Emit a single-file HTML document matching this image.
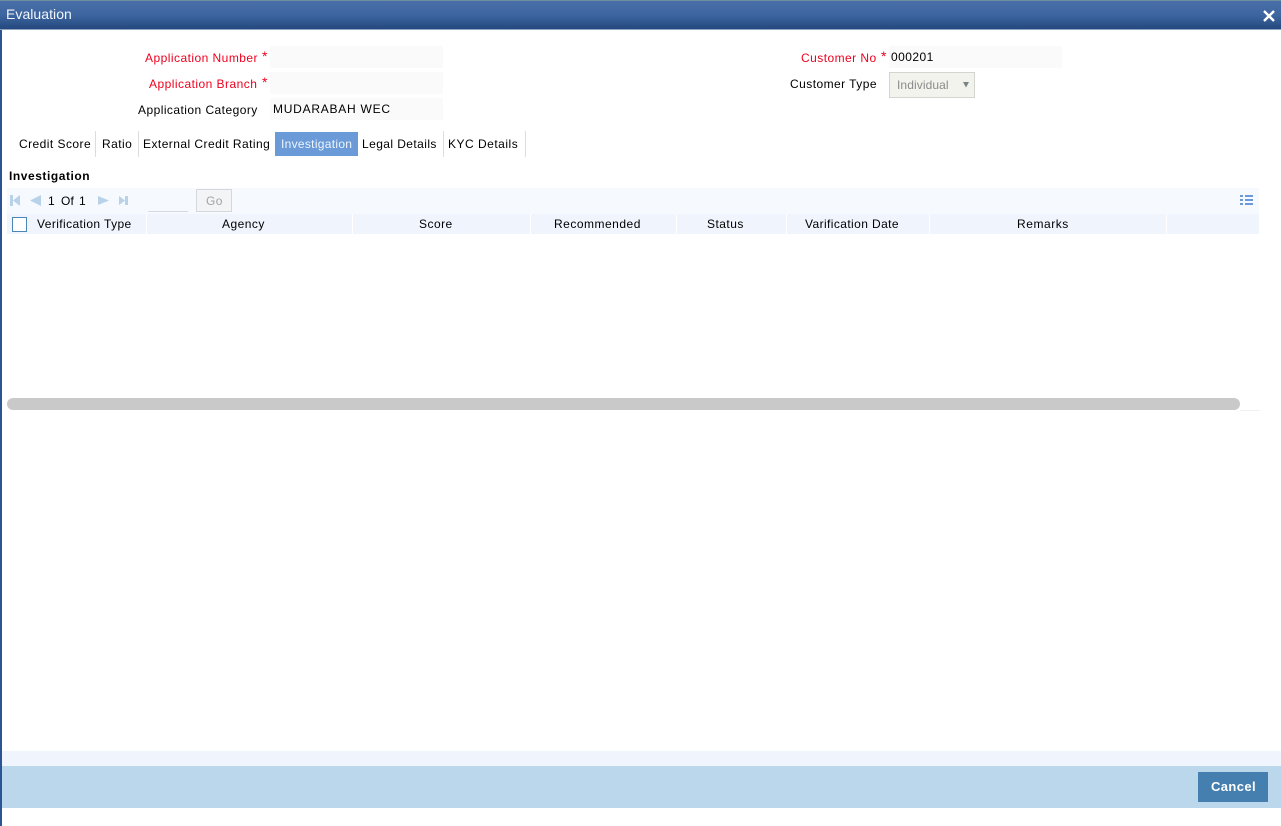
<!DOCTYPE html>
<html><head><meta charset="utf-8"><style>
html,body{margin:0;padding:0;width:1281px;height:826px;overflow:hidden;background:#fff}
body{position:relative;font-family:"Liberation Sans",Arial,sans-serif;font-size:12px;color:#000}
.a{position:absolute}
.t{position:absolute;white-space:nowrap;line-height:14px;letter-spacing:.47px}
.r{color:#f0001e}
.f{position:absolute;background:#fafafa;left:270px;width:173px;height:22px}
.s{position:absolute;top:131px;width:1px;height:26px;background:#ddd}
.h{position:absolute;top:214px;height:20px;background:#f0f5fd}
</style></head><body>
<div class="a" style="left:0;top:0;width:1281px;height:1px;background:#6d8f9f"></div>
<div class="a" style="left:0;top:1px;width:1281px;height:28px;background:linear-gradient(#4a6fa8,#3d659f 50%,#24487f)"></div>
<div class="a" style="left:0;top:29px;width:1281px;height:1px;background:#8ea5c0"></div>
<div class="a" style="left:0;top:30px;width:2px;height:796px;background:#2c5494"></div>
<div class="t" style="left:6px;top:6px;font-size:14px;line-height:16px;color:#f2f5fa;letter-spacing:.05px">Evaluation</div>
<svg class="a" style="left:1262px;top:9px" width="14" height="14" viewBox="0 0 14 14"><path d="M2 2L12 12M12 2L2 12" stroke="#fff" stroke-width="2.4"/></svg>

<div class="t r" style="left:145px;top:51px;letter-spacing:.46px">Application Number</div>
<div class="t r" style="left:262px;top:49px;font-size:14px">*</div>
<div class="t r" style="left:149px;top:77px;letter-spacing:.46px">Application Branch</div>
<div class="t r" style="left:262px;top:75px;font-size:14px">*</div>
<div class="t" style="left:138px;top:103px;letter-spacing:.45px">Application Category</div>
<div class="f" style="top:46px"></div><div class="f" style="top:72px"></div><div class="f" style="top:98px"></div>
<div class="t" style="left:273px;top:102px;letter-spacing:.75px">MUDARABAH WEC</div>

<div class="t r" style="left:801px;top:51px;letter-spacing:.45px">Customer No</div>
<div class="t r" style="left:881px;top:49px;font-size:14px">*</div>
<div class="a" style="left:889px;top:46px;width:173px;height:22px;background:#fafafa"></div>
<div class="t" style="left:891px;top:50px;letter-spacing:.45px">000201</div>
<div class="t" style="left:790px;top:77px;letter-spacing:.45px">Customer Type</div>
<div class="a" style="left:889px;top:72px;width:84px;height:24px;background:#f3f3ee;border:1px solid #d4d4d0"></div>
<div class="t" style="left:897px;top:78px;color:#8a8a8a;letter-spacing:.1px">Individual</div>
<svg class="a" style="left:962px;top:82px" width="8" height="6"><path d="M1 0H7L4 5.500Z" fill="#7a8484"/></svg>

<div class="t" style="left:19px;top:137px;letter-spacing:.45px">Credit Score</div>
<div class="s" style="left:95px"></div>
<div class="t" style="left:102px;top:137px;letter-spacing:.45px">Ratio</div>
<div class="s" style="left:138px"></div>
<div class="t" style="left:143px;top:137px;letter-spacing:.45px">External Credit Rating</div>
<div class="a" style="left:275px;top:132px;width:83px;height:24px;background:#6a9bd8"></div>
<div class="t" style="left:281px;top:137px;color:#eef4fc;letter-spacing:.3px">Investigation</div>
<div class="t" style="left:362px;top:137px;letter-spacing:.42px">Legal Details</div>
<div class="s" style="left:443px"></div>
<div class="t" style="left:448px;top:137px;letter-spacing:.5px">KYC Details</div>
<div class="s" style="left:525px"></div>

<div class="t" style="left:9px;top:169px;font-weight:bold;letter-spacing:.55px">Investigation</div>

<div class="a" style="left:7px;top:188px;width:1252px;height:26px;background:#f6f9fe"></div>
<svg class="a" style="left:9px;top:194px" width="122" height="13" fill="#b8d2ea">
<rect x="1" y="1" width="3" height="11"/><path d="M11 1V12L4 6.500Z"/>
<path d="M32 1V12L21 6.500Z"/>
<path d="M89 2V11L100 6.500Z"/>
<path d="M110 2V11L116 6.500Z"/><rect x="116" y="2" width="3" height="9"/>
</svg>
<div class="t" style="left:48px;top:194px">1</div>
<div class="t" style="left:61px;top:194px;letter-spacing:.2px">Of</div>
<div class="t" style="left:79px;top:194px">1</div>
<div class="a" style="left:148px;top:211px;width:40px;height:1px;background:#d5dbe2"></div>
<div class="a" style="left:196px;top:189px;width:34px;height:21px;background:#f2f4f6;border:1px solid #d4d8dc"></div>
<div class="t" style="left:206px;top:194px;color:#a0a4a8">Go</div>
<svg class="a" style="left:1240px;top:195px" width="13" height="11" fill="#6b98da">
<rect x="0" y="0" width="3" height="2"/><rect x="5" y="0" width="8" height="2"/>
<rect x="0" y="4" width="3" height="2"/><rect x="5" y="4" width="8" height="2"/>
<rect x="0" y="8" width="3" height="2"/><rect x="5" y="8" width="8" height="2"/>
</svg>

<div class="h" style="left:7px;width:139px"></div>
<div class="h" style="left:147px;width:205px"></div>
<div class="h" style="left:353px;width:177px"></div>
<div class="h" style="left:531px;width:145px"></div>
<div class="h" style="left:677px;width:109px"></div>
<div class="h" style="left:787px;width:142px"></div>
<div class="h" style="left:930px;width:236px"></div>
<div class="h" style="left:1167px;width:92px"></div>
<div class="a" style="left:12px;top:217px;width:13px;height:13px;background:#fff;border:1px solid #4a86b8"></div>
<div class="t" style="left:37px;top:217px;letter-spacing:.4px">Verification Type</div>
<div class="t" style="left:222px;top:217px">Agency</div>
<div class="t" style="left:419px;top:217px">Score</div>
<div class="t" style="left:554px;top:217px;letter-spacing:.5px">Recommended</div>
<div class="t" style="left:707px;top:217px">Status</div>
<div class="t" style="left:805px;top:217px;letter-spacing:.4px">Varification Date</div>
<div class="t" style="left:1017px;top:217px;letter-spacing:.55px">Remarks</div>

<div class="a" style="left:7px;top:398px;width:1233px;height:12px;border-radius:6px;background:#c9c9c9"></div>
<div class="a" style="left:1240px;top:410px;width:20px;height:1px;background:#f0f0f0"></div>

<div class="a" style="left:2px;top:751px;width:1279px;height:15px;background:#f0f5fd"></div>
<div class="a" style="left:2px;top:766px;width:1279px;height:42px;background:#bad7ec"></div>
<div class="a" style="left:1198px;top:772px;width:70px;height:30px;background:#457fb0"></div>
<div class="t" style="left:1211px;top:780px;color:#fff;font-weight:bold;font-size:13px;letter-spacing:.4px">Cancel</div>
</body></html>
